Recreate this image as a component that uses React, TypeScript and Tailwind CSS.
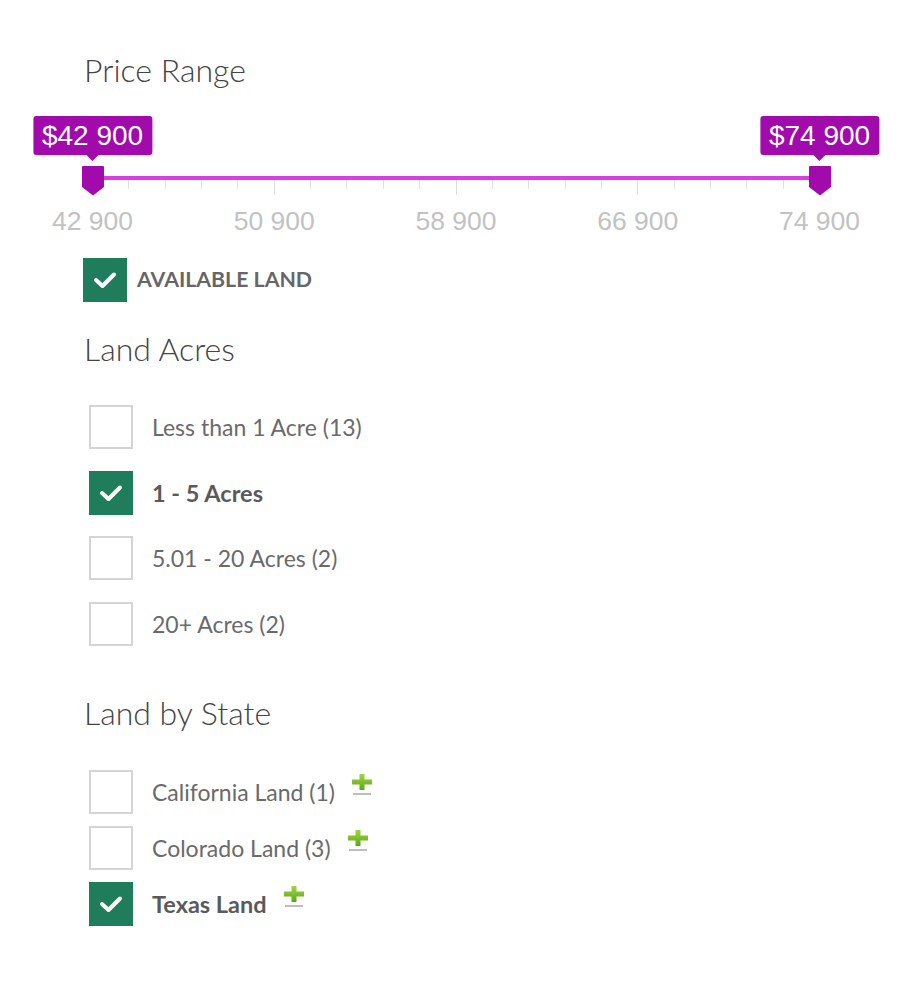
import React from "react";

const FONT = { fontFamily: "Lato, 'Noto Sans', sans-serif" };

function Check() {
  return (
    <svg width="44" height="44" viewBox="0 0 44 44" className="block">
      <path d="M13 22 L19.5 28 L31 16.5" fill="none" stroke="#fff" strokeWidth="4" strokeLinecap="round" strokeLinejoin="round" />
    </svg>
  );
}

function Box({ checked }: { checked?: boolean }) {
  return checked ? (
    <div className="w-[44px] h-[44px] bg-[#1f7d5b] shrink-0">
      <Check />
    </div>
  ) : (
    <div className="w-[44px] h-[44px] border-2 border-[#d4d4d4] bg-white shrink-0" />
  );
}

function Plus() {
  return (
    <svg width="22" height="24" viewBox="0 0 22 24" className="block">
      <defs>
        <linearGradient id="pg" x1="0" y1="0" x2="0" y2="1">
          <stop offset="0" stopColor="#a2d640" />
          <stop offset="1" stopColor="#5ea51c" />
        </linearGradient>
        <filter id="bl" x="-20%" y="-200%" width="140%" height="500%">
          <feGaussianBlur stdDeviation="0.7" />
        </filter>
      </defs>
      <rect x="2" y="19" width="18" height="2" fill="#8a8a8a" opacity="0.55" filter="url(#bl)" />
      <path d="M8.5 0 H13.5 V5.5 H21 V10.5 H13.5 V16 H8.5 V10.5 H1 V5.5 H8.5 Z" fill="url(#pg)" />
    </svg>
  );
}

const ticksMajor = [0, 181.75, 363.5, 545.25, 727];
const labels = ["42 900", "50 900", "58 900", "66 900", "74 900"];

function Slider() {
  const minor: number[] = [];
  for (let i = 0; i < 4; i++) {
    for (let j = 1; j < 5; j++) minor.push(ticksMajor[i] + (181.75 * j) / 5);
  }
  return (
    <div className="relative ml-[8px] w-[727px] h-[140px] mt-[20px]">
      {minor.map((x, i) => (
        <div key={"m" + i} className="absolute top-[71px] w-px h-[9px] bg-[#e2e2e2]" style={{ left: x }} />
      ))}
      {ticksMajor.map((x, i) => (
        <div key={"M" + i} className="absolute top-[71px] w-px h-[15px] bg-[#dcdcdc]" style={{ left: x }} />
      ))}
      <div className="absolute left-0 right-0 top-[67px] h-[4px] bg-[#d83ee0]" />
      {labels.map((l, i) => (
        <div
          key={l}
          className="absolute top-[97px] -translate-x-1/2 text-[26.5px] leading-[30px] text-[#c2c2c2] whitespace-nowrap"
          style={{ left: ticksMajor[i] + 0.5, fontFamily: "'Liberation Sans', Arial, sans-serif" }}
        >
          {l}
        </div>
      ))}
      {[
        { x: 0, t: "$42 900" },
        { x: 727, t: "$74 900" },
      ].map((h) => (
        <React.Fragment key={h.t}>
          <div
            className="absolute top-[7px] -translate-x-1/2 h-[39px] px-[9px] rounded-[3px] bg-[#a10aab] text-white text-[28px] leading-[39px] whitespace-nowrap"
            style={{ left: h.x + 0.5, fontFamily: "'Liberation Sans', Arial, sans-serif" }}
          >
            {h.t}
            <div className="absolute left-1/2 -translate-x-1/2 top-[39px] w-0 h-0 border-l-[6px] border-r-[6px] border-t-[6px] border-l-transparent border-r-transparent border-t-[#a10aab]" />
          </div>
          <svg
            width="22"
            height="30"
            viewBox="0 0 22 30"
            className="absolute top-[57px]"
            style={{ left: h.x - 10.5 }}
          >
            <path d="M0 1 Q0 0 1 0 H21 Q22 0 22 1 V21 L11 29.5 L0 21 Z" fill="#a10aab" />
          </svg>
        </React.Fragment>
      ))}
    </div>
  );
}

function Row({ checked, label, plus }: { checked?: boolean; label: string; plus?: boolean }) {
  return (
    <div className="flex items-center h-[44px]">
      <Box checked={checked} />
      <span className={"ml-[19px] leading-[28px] " + (checked ? "text-[23.5px] font-bold text-[#5a5a5a]" : "text-[23px] text-[#6a6a6a]")}>{label}</span>
      {plus && (
        <span className="ml-[16px] -mt-[12px]">
          <Plus />
        </span>
      )}
    </div>
  );
}

export default function App() {
  return (
    <div className="bg-white w-[920px] h-[1000px] pl-[84px] pt-[51px]" style={FONT}>
      <h2 className="text-[32px] leading-[38px] font-light text-[#444]">Price Range</h2>
      <Slider />
      <div className="flex items-center h-[44px] -ml-px mt-[9px]">
        <Box checked />
        <span className="ml-[10px] text-[21.3px] font-bold text-[#666] uppercase">Available Land</span>
      </div>
      <h2 className="mt-[28px] text-[32px] leading-[38px] font-light text-[#444]">Land Acres</h2>
      <div className="ml-[5px] mt-[37px] flex flex-col gap-[21.7px]">
        <Row label="Less than 1 Acre (13)" />
        <Row checked label="1 - 5 Acres" />
        <Row label="5.01 - 20 Acres (2)" />
        <Row label="20+ Acres (2)" />
      </div>
      <h2 className="mt-[48px] text-[32px] leading-[38px] font-light text-[#444]">Land by State</h2>
      <div className="ml-[5px] mt-[38px] flex flex-col gap-[12px]">
        <Row label="California Land (1)" plus />
        <Row label="Colorado Land (3)" plus />
        <Row checked label="Texas Land" plus />
      </div>
    </div>
  );
}
